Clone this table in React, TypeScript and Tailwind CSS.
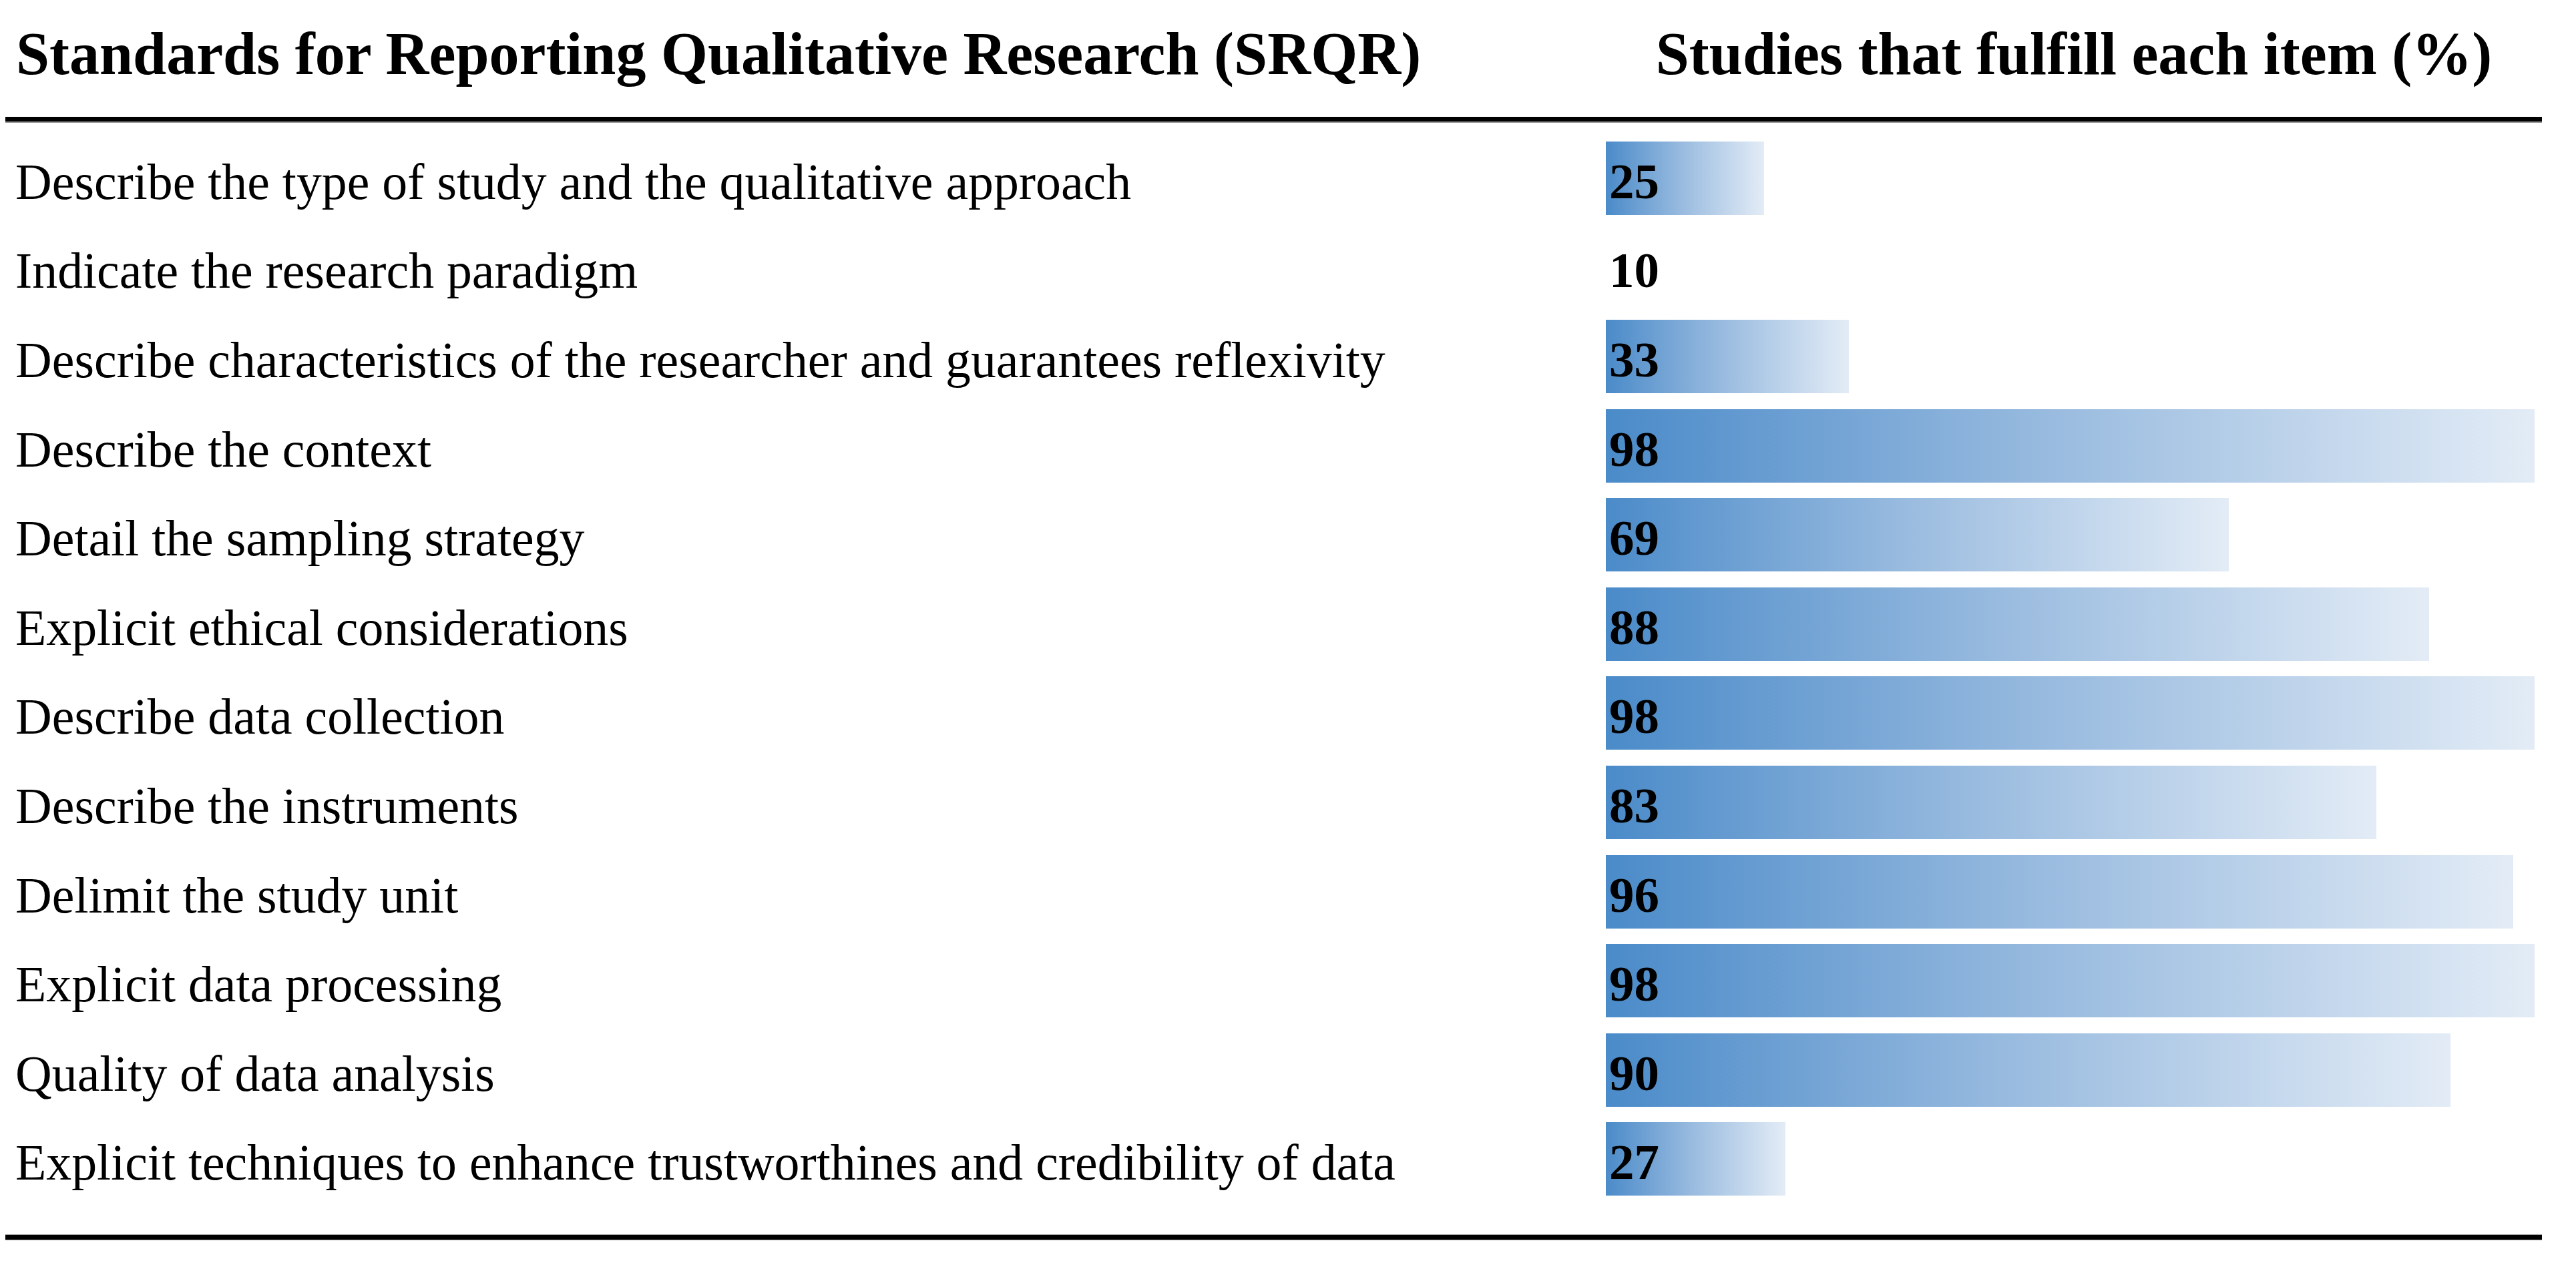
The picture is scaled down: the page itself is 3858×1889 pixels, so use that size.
import React from "react";

const rows: { label: string; value: number }[] = [
  { label: "Describe the type of study and the qualitative approach", value: 25 },
  { label: "Indicate the research paradigm", value: 10 },
  { label: "Describe characteristics of the researcher and guarantees reflexivity", value: 33 },
  { label: "Describe the context", value: 98 },
  { label: "Detail the sampling strategy", value: 69 },
  { label: "Explicit ethical considerations", value: 88 },
  { label: "Describe data collection", value: 98 },
  { label: "Describe the instruments", value: 83 },
  { label: "Delimit the study unit", value: 96 },
  { label: "Explicit data processing", value: 98 },
  { label: "Quality of data analysis", value: 90 },
  { label: "Explicit techniques to enhance trustworthines and credibility of data", value: 27 },
];

const FULL = 1391;

export default function App() {
  return (
    <div
      className="min-h-screen w-full bg-white text-black"
      style={{ fontFamily: '"Liberation Serif", "Times New Roman", serif' }}
    >
      <div className="ml-[8px] w-[3799px]">
        {/* header */}
        <div className="flex h-[175px] items-start pt-[36px] text-[90px] font-bold leading-[89px]">
          <div className="w-[2397px] shrink-0 pl-[16px] whitespace-nowrap">
            Standards for Reporting Qualitative Research (SRQR)
          </div>
          <div className="flex-1 text-center whitespace-nowrap">Studies that fulfill each item (%)</div>
        </div>
        <div className="h-[9px] border-b-2 border-[#9a9a9a] bg-black" />

        {/* rows */}
        <div className="mt-[16px] flex flex-col">
          {rows.map((r) => {
            const w = ((r.value - 10) / 88) * FULL;
            return (
              <div key={r.label} className="flex h-[133.6px] items-center">
                <div className="w-[2397px] shrink-0 pl-[15px] pt-[10px] text-[75.8px] leading-[110px] whitespace-nowrap">
                  {r.label}
                </div>
                <div className="flex-1">
                  {w > 0 ? (
                    <div
                      className="h-[110px] bg-linear-to-r from-[#4a8bc9] via-[#9cbde0] to-[#e3ecf6] pl-[5px] text-[75px] font-bold leading-[120px] whitespace-nowrap"
                      style={{ width: `${w}px` }}
                    >
                      {r.value}
                    </div>
                  ) : (
                    <div className="h-[110px] pl-[5px] text-[75px] font-bold leading-[120px] whitespace-nowrap">
                      {r.value}
                    </div>
                  )}
                </div>
              </div>
            );
          })}
        </div>

        <div className="mt-[46px] h-[9px] border-y border-[#9a9a9a] bg-black" />
      </div>
    </div>
  );
}
